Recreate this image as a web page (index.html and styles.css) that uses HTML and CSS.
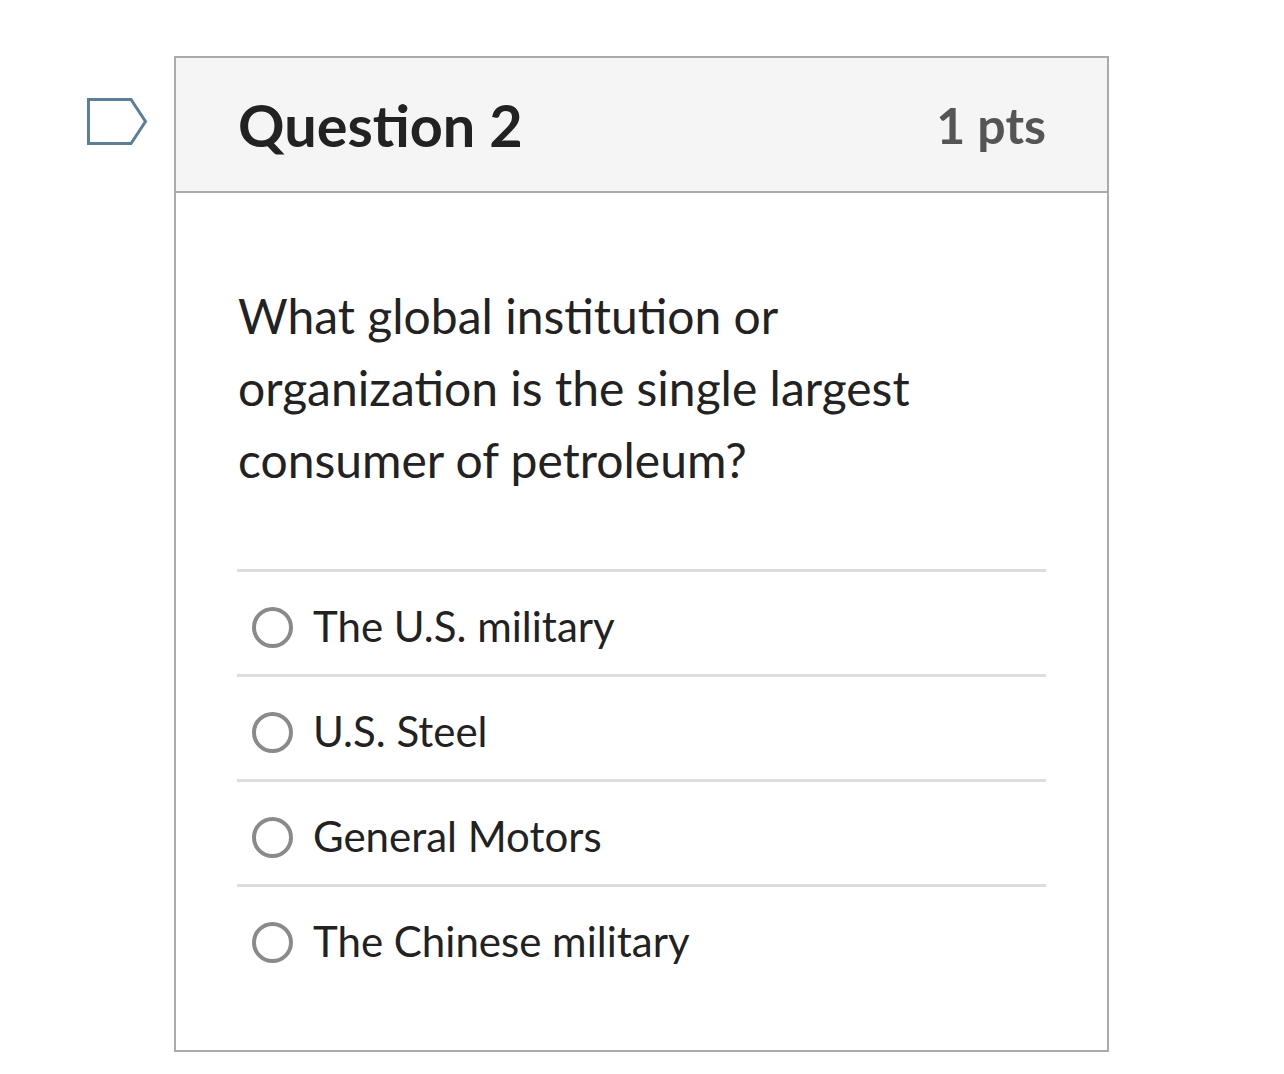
FILE: index.html
```html
<!DOCTYPE html>
<html lang="en">
<head>
<meta charset="utf-8">
<title>Question 2</title>
<link rel="stylesheet" href="styles.css">
</head>
<body>
<div class="page">
  <div class="flag" aria-hidden="true">
    <svg width="62" height="50" viewBox="0 0 62 50">
      <path d="M2.5 2.5 H45 L59.5 24.5 L45 46.5 H2.5 Z" fill="none" stroke="#5b7f99" stroke-width="3" stroke-linejoin="miter"/>
    </svg>
  </div>
  <div class="card">
    <div class="card-header">
      <h2 class="title">Question 2</h2>
      <div class="pts">1 pts</div>
    </div>
    <div class="card-body">
      <p class="question">What global institution or organization is the single largest consumer of petroleum?</p>
      <div class="answers">
        <label class="answer"><span class="radio"></span><span class="answer-text">The U.S. military</span></label>
        <label class="answer"><span class="radio"></span><span class="answer-text">U.S. Steel</span></label>
        <label class="answer"><span class="radio"></span><span class="answer-text">General Motors</span></label>
        <label class="answer"><span class="radio"></span><span class="answer-text">The Chinese military</span></label>
      </div>
    </div>
  </div>
</div>
</body>
</html>
```
FILE: styles.css
```css
html, body {
  margin: 0;
  padding: 0;
  background: #ffffff;
}
body {
  font-family: Lato, "Open Sans", "Liberation Sans", sans-serif;
  color: #222222;
}
.page {
  display: flex;
  align-items: flex-start;
  padding: 56px 0 0 86px;
}
.flag {
  width: 62px;
  height: 50px;
  margin-top: 41px;
  margin-right: 26px;
}
.flag svg {
  display: block;
}
.card {
  width: 931px;
  border: 2px solid #aaaaaa;
  background: #ffffff;
}
.card-header {
  display: flex;
  align-items: center;
  justify-content: space-between;
  height: 135px;
  background: #f5f5f5;
  border-bottom: 2px solid #aaaaaa;
  padding: 0 61px 0 62px;
  box-sizing: border-box;
}
.title {
  margin: 0;
  font-size: 57.6px;
  font-weight: 700;
  color: #222222;
  line-height: 1;
}
.pts {
  font-size: 50px;
  font-weight: 700;
  color: #555555;
  line-height: 1;
}
.card-body {
  padding: 87px 61px 61px 62px;
}
.question {
  margin: 0 0 73px 0;
  font-size: 48px;
  line-height: 72px;
  color: #222222;
  width: 690px;
}
.answers {
  display: flex;
  flex-direction: column;
  margin-left: -1px;
}
.answer {
  display: flex;
  align-items: center;
  border-top: 3px solid #dddddd;
  height: 105px;
  box-sizing: border-box;
  padding: 5px 0 0 15px;
  font-size: 42px;
}
.radio {
  width: 41px;
  height: 41px;
  box-sizing: border-box;
  border: 4px solid #8a8a8a;
  border-radius: 50%;
  flex: none;
  margin-right: 20px;
  position: relative;
  top: 2px;
}
.answer-text {
  line-height: 60px;
  color: #222222;
}
```
